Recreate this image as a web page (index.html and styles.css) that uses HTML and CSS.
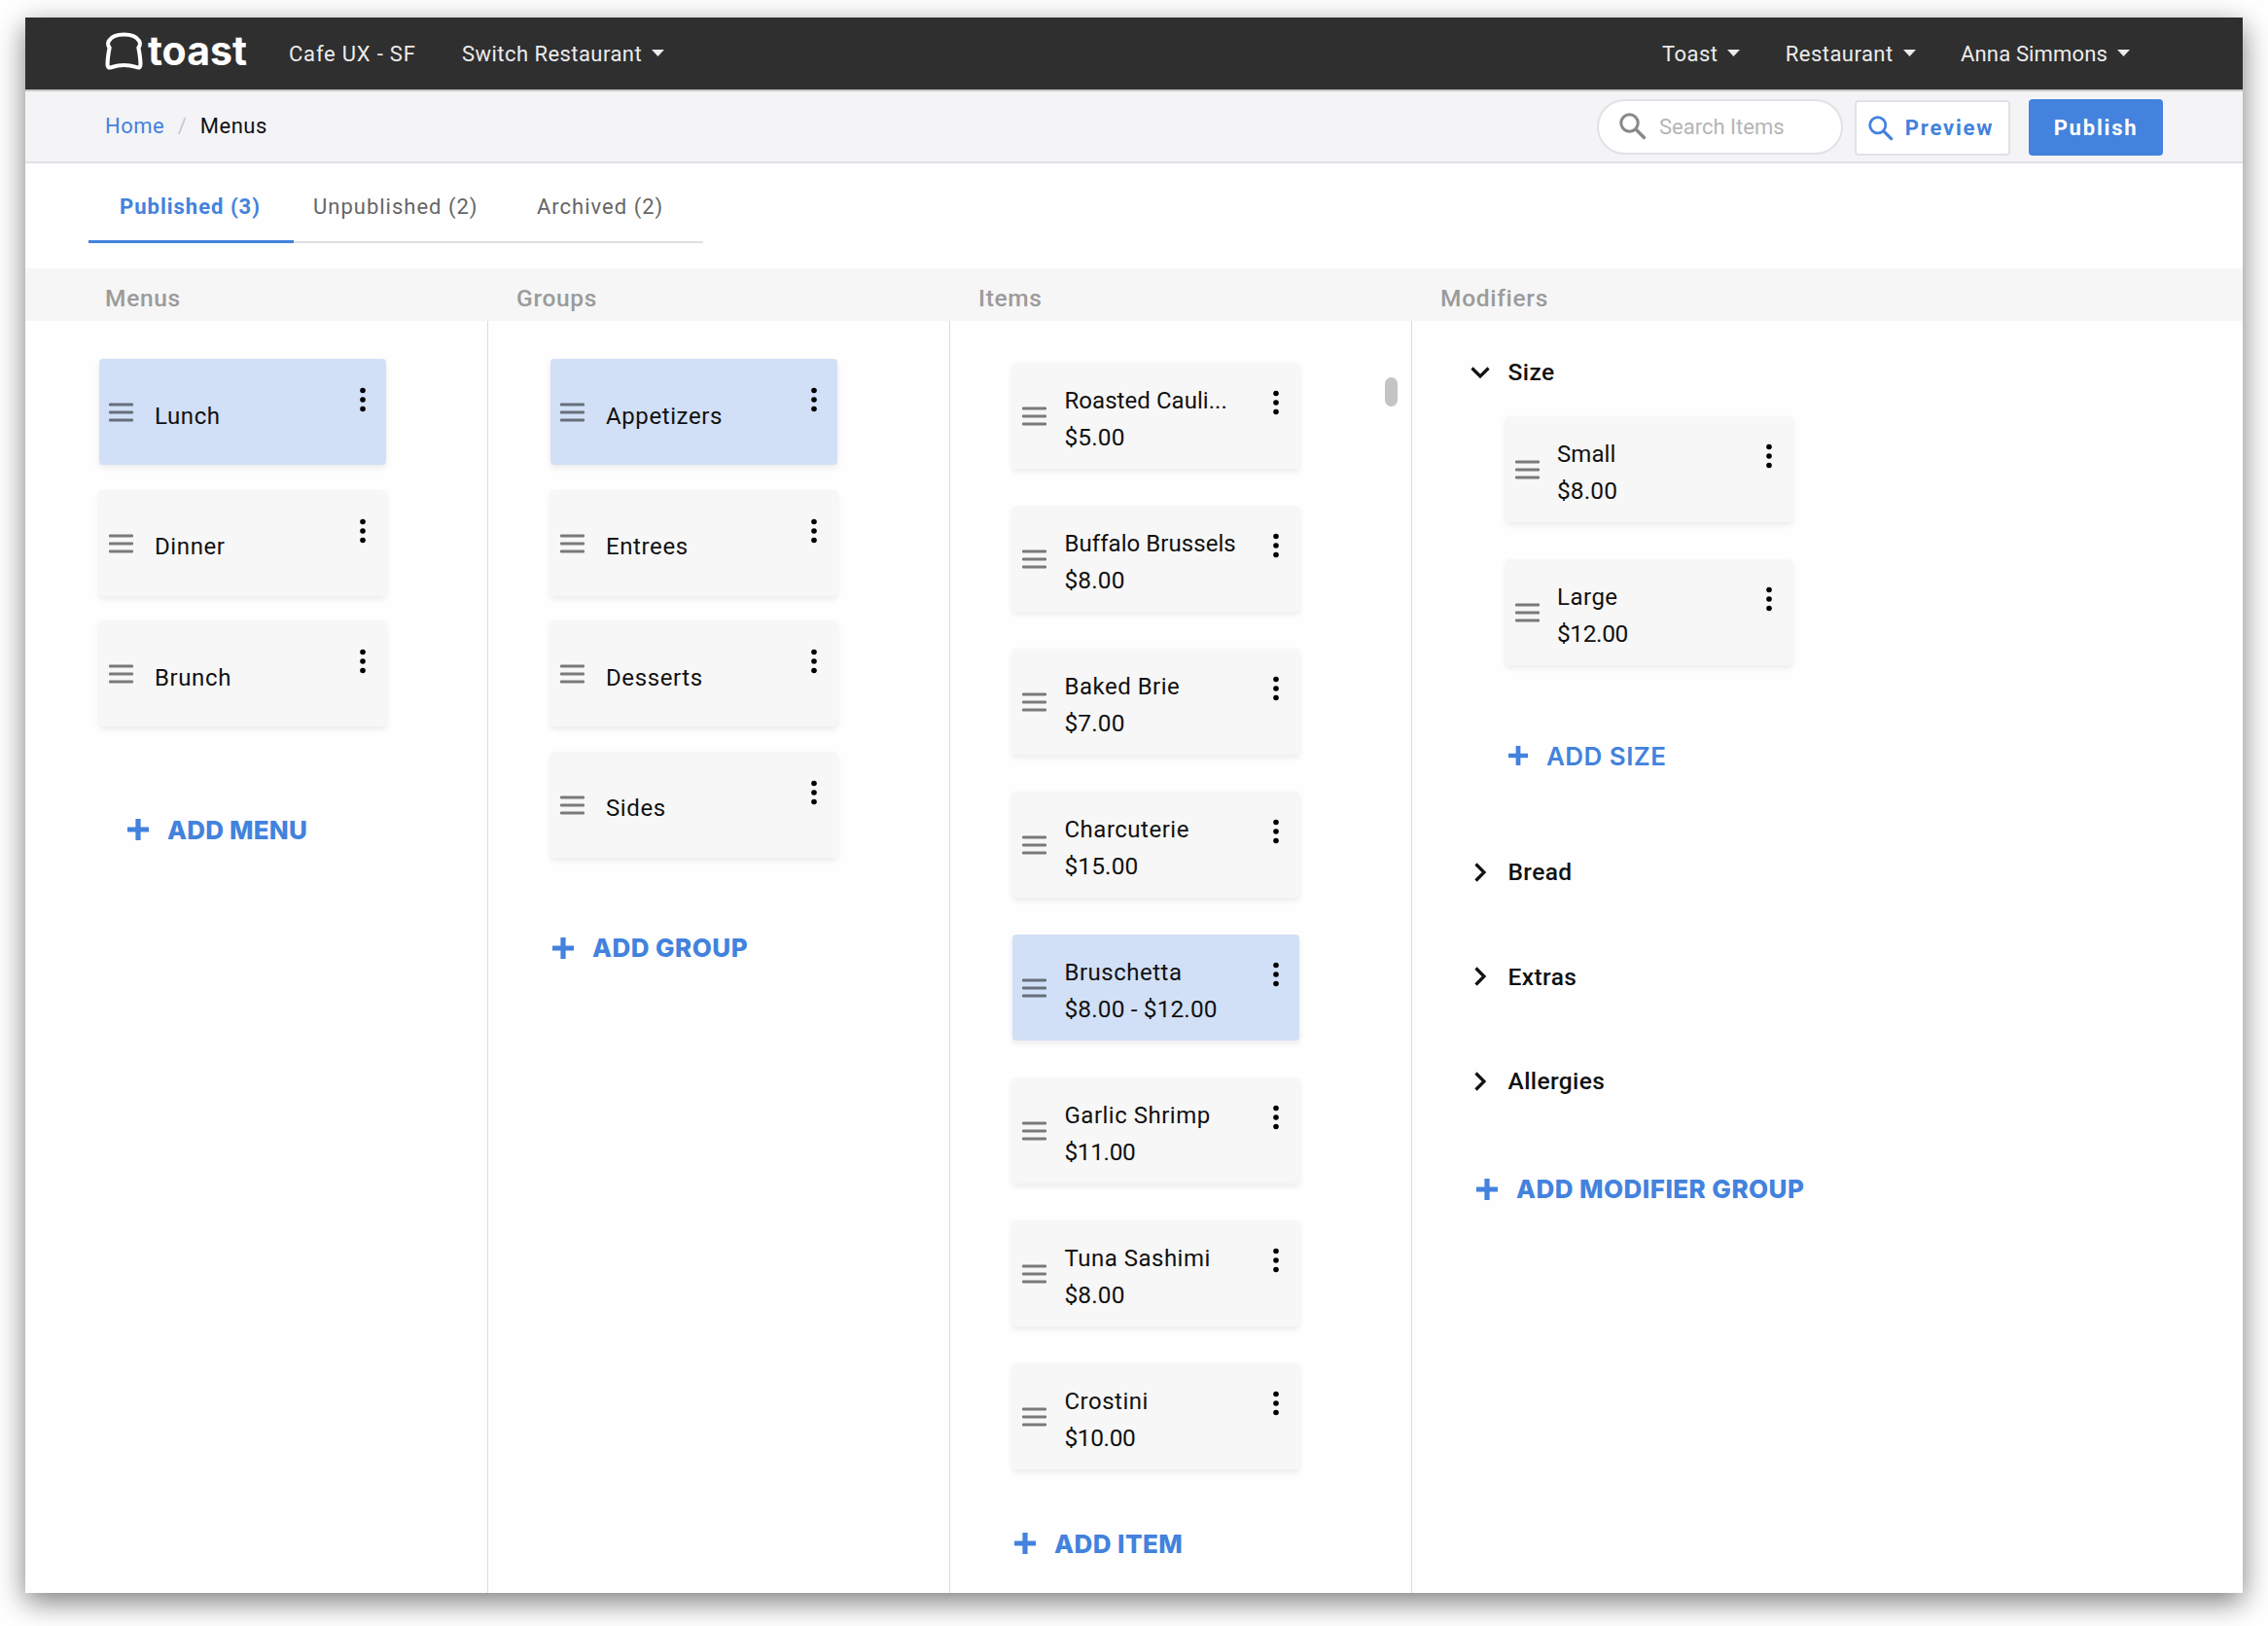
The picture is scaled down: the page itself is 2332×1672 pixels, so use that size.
FILE: index.html
```
<!DOCTYPE html>
<html lang="en">
<head>
    <meta charset="UTF-8">
    <meta name="viewport" content="width=device-width, initial-scale=1.0">
    <title>Toast - Menus</title>
    <link rel="stylesheet" href="styles.css">
</head>
<body>
<svg class="sprite">
    <symbol id="drag" viewBox="0 0 25 20">
        <path d="M1 2H24M1 10H24M1 18H24" stroke="currentColor" stroke-width="2.8" stroke-linecap="round"/>
    </symbol>
    <symbol id="dots" viewBox="0 0 8 26">
        <circle cx="4" cy="3.5" r="2.8"/><circle cx="4" cy="13" r="2.8"/><circle cx="4" cy="22.5" r="2.8"/>
    </symbol>
    <symbol id="plus" viewBox="0 0 22 22">
        <path d="M11 0V22M0 11H22" stroke="currentColor" stroke-width="5.2"/>
    </symbol>
    <symbol id="search" viewBox="0 0 28 28">
        <circle cx="10.5" cy="10.5" r="8.7" fill="none" stroke="currentColor" stroke-width="3"/>
        <path d="M17 17L26.5 26.5" stroke="currentColor" stroke-width="3.4"/>
    </symbol>
    <symbol id="caret" viewBox="0 0 13 7"><path d="M0 0H13L6.5 7Z" fill="currentColor"/></symbol>
    <symbol id="down" viewBox="0 0 22 22">
        <path d="M2.5 6.5L11 15L19.5 6.5" fill="none" stroke="currentColor" stroke-width="3.2"/>
    </symbol>
    <symbol id="right" viewBox="0 0 22 22">
        <path d="M6.5 2.5L15 11L6.5 19.5" fill="none" stroke="currentColor" stroke-width="3.2"/>
    </symbol>
</svg>

<div class="window">
    <header class="topbar">
        <div class="logo">
            <svg class="bread" viewBox="0 0 38 38"><path d="M4.500 15.500C2.500 13 2.500 10 4.500 8C9 0.500 29 0.500 33.500 8C35.500 10 35.500 13 33.500 15.500C34.500 21 35.500 26 35.500 32C35.500 36 34 36 31 35C24 32.800 14 32.800 7 35C4 36 2.500 36 2.500 32C2.500 26 3.500 21 4.500 15.500Z" fill="none" stroke="#fff" stroke-width="4" stroke-linejoin="round"/></svg>
            <span>toast</span>
        </div>
        <span class="location">Cafe UX - SF</span>
        <a class="nav-link">Switch Restaurant <svg class="caret"><use href="#caret"/></svg></a>
        <nav class="nav-right">
            <a class="nav-link">Toast <svg class="caret"><use href="#caret"/></svg></a>
            <a class="nav-link">Restaurant <svg class="caret"><use href="#caret"/></svg></a>
            <a class="nav-link user">Anna Simmons <svg class="caret"><use href="#caret"/></svg></a>
        </nav>
    </header>

    <div class="subbar">
        <div class="breadcrumb">
            <a>Home</a><span class="slash">/</span><span>Menus</span>
        </div>
        <div class="actions">
            <div class="search"><svg class="search-icon"><use href="#search"/></svg>Search Items</div>
            <button class="btn preview"><svg class="search-icon"><use href="#search"/></svg>Preview</button>
            <button class="btn publish">Publish</button>
        </div>
    </div>

    <div class="tabs">
        <div class="tab active">Published (3)</div>
        <div class="tab unpublished">Unpublished (2)</div>
        <div class="tab archived">Archived (2)</div>
    </div>

    <div class="heads">
        <div>Menus</div>
        <div>Groups</div>
        <div>Items</div>
        <div>Modifiers</div>
    </div>

    <main class="columns">
        <section class="column menus">
            <div class="cards">
                <div class="card selected"><svg class="drag"><use href="#drag"/></svg><div class="name">Lunch</div><svg class="dots"><use href="#dots"/></svg></div>
                <div class="card"><svg class="drag"><use href="#drag"/></svg><div class="name">Dinner</div><svg class="dots"><use href="#dots"/></svg></div>
                <div class="card"><svg class="drag"><use href="#drag"/></svg><div class="name">Brunch</div><svg class="dots"><use href="#dots"/></svg></div>
            </div>
            <div class="add"><svg class="plus"><use href="#plus"/></svg>ADD MENU</div>
        </section>

        <section class="column groups">
            <div class="cards">
                <div class="card selected"><svg class="drag"><use href="#drag"/></svg><div class="name">Appetizers</div><svg class="dots"><use href="#dots"/></svg></div>
                <div class="card"><svg class="drag"><use href="#drag"/></svg><div class="name">Entrees</div><svg class="dots"><use href="#dots"/></svg></div>
                <div class="card"><svg class="drag"><use href="#drag"/></svg><div class="name">Desserts</div><svg class="dots"><use href="#dots"/></svg></div>
                <div class="card"><svg class="drag"><use href="#drag"/></svg><div class="name">Sides</div><svg class="dots"><use href="#dots"/></svg></div>
            </div>
            <div class="add"><svg class="plus"><use href="#plus"/></svg>ADD GROUP</div>
        </section>

        <section class="column items">
            <div class="cards priced">
                <div class="card"><svg class="drag"><use href="#drag"/></svg><div class="name">Roasted Cauli...<div class="price">$5.00</div></div><svg class="dots"><use href="#dots"/></svg></div>
                <div class="card"><svg class="drag"><use href="#drag"/></svg><div class="name">Buffalo Brussels<div class="price">$8.00</div></div><svg class="dots"><use href="#dots"/></svg></div>
                <div class="card"><svg class="drag"><use href="#drag"/></svg><div class="name wide">Baked Brie<div class="price">$7.00</div></div><svg class="dots"><use href="#dots"/></svg></div>
                <div class="card"><svg class="drag"><use href="#drag"/></svg><div class="name wide">Charcuterie<div class="price">$15.00</div></div><svg class="dots"><use href="#dots"/></svg></div>
                <div class="card selected"><svg class="drag"><use href="#drag"/></svg><div class="name wide">Bruschetta<div class="price">$8.00 - $12.00</div></div><svg class="dots"><use href="#dots"/></svg></div>
                <div class="card"><svg class="drag"><use href="#drag"/></svg><div class="name wide">Garlic Shrimp<div class="price narrow">$11.00</div></div><svg class="dots"><use href="#dots"/></svg></div>
                <div class="card"><svg class="drag"><use href="#drag"/></svg><div class="name wide">Tuna Sashimi<div class="price">$8.00</div></div><svg class="dots"><use href="#dots"/></svg></div>
                <div class="card"><svg class="drag"><use href="#drag"/></svg><div class="name wide">Crostini<div class="price narrow">$10.00</div></div><svg class="dots"><use href="#dots"/></svg></div>
            </div>
            <div class="add"><svg class="plus"><use href="#plus"/></svg>ADD ITEM</div>
            <div class="scroll-thumb"></div>
        </section>

        <section class="column modifiers">
            <div class="modifier"><svg class="chevron"><use href="#down"/></svg>Size</div>
            <div class="cards priced">
                <div class="card"><svg class="drag"><use href="#drag"/></svg><div class="name">Small<div class="price">$8.00</div></div><svg class="dots"><use href="#dots"/></svg></div>
                <div class="card"><svg class="drag"><use href="#drag"/></svg><div class="name wide">Large<div class="price narrow">$12.00</div></div><svg class="dots"><use href="#dots"/></svg></div>
            </div>
            <div class="add add-size"><svg class="plus"><use href="#plus"/></svg>ADD SIZE</div>
            <div class="collapsed">
                <div class="modifier"><svg class="chevron"><use href="#right"/></svg>Bread</div>
                <div class="modifier"><svg class="chevron"><use href="#right"/></svg>Extras</div>
                <div class="modifier"><svg class="chevron"><use href="#right"/></svg>Allergies</div>
            </div>
            <div class="add add-modifier"><svg class="plus"><use href="#plus"/></svg>ADD MODIFIER GROUP</div>
        </section>
    </main>
</div>
</body>
</html>
```
FILE: styles.css
```
* {
    box-sizing: border-box;
}
body {
    margin: 0;
    padding: 18px 26px 34px;
    height: 1672px;
    background: #fff;
    font-family: Roboto, "Liberation Sans", sans-serif;
    font-size: 22px;
    color: #111;
    overflow: hidden;
}
svg {
    display: block;
    flex: none;
}
.sprite {
    display: none;
}
.window {
    display: flex;
    flex-direction: column;
    width: 2280px;
    height: 1620px;
    background: #fefefe;
    box-shadow: 0 9px 28px rgba(0,0,0,0.52);
}

/* top bar */
.topbar {
    display: flex;
    align-items: center;
    height: 76px;
    padding: 0 116px 0 82px;
    background: #2f2f2f;
    border-bottom: 2px solid #c8c8c8;
    color: #ececec;
    white-space: nowrap;
}
.logo {
    display: flex;
    align-items: center;
    width: 189px;
    padding-bottom: 6px;
    font-family: Inter, sans-serif;
    font-size: 41px;
    font-weight: 700;
    line-height: 40px;
    color: #fff;
}
.bread {
    width: 39px;
    height: 39px;
    margin-right: 5px;
}
.location {
    width: 178px;
    letter-spacing: 0.8px;
}
.nav-link {
    display: flex;
    align-items: center;
    gap: 10px;
    letter-spacing: 0.45px;
}
.nav-link.user {
    letter-spacing: 0.15px;
}
.caret {
    width: 13px;
    height: 7px;
    margin-top: -2px;
}
.nav-right {
    display: flex;
    gap: 46.5px;
    margin-left: auto;
}

/* breadcrumb and actions */
.subbar {
    display: flex;
    justify-content: space-between;
    align-items: center;
    height: 74px;
    padding: 0 82px;
    background: #f4f4f7;
    border-bottom: 2px solid #e1e1e6;
}
.breadcrumb {
    padding-bottom: 2px;
    letter-spacing: 0.5px;
}
.breadcrumb a {
    color: #4382dd;
}
.slash {
    margin: 0 13.5px;
    color: #c8c8cc;
}
.actions {
    display: flex;
    align-items: center;
    padding-top: 2px;
}
.search {
    display: flex;
    align-items: center;
    gap: 13px;
    width: 253px;
    height: 57px;
    margin: 0 12px 2px 0;
    padding-left: 21px;
    border: 2px solid #e1e1e6;
    border-radius: 29px;
    background: #fff;
    color: #b5b5b5;
}
.search-icon {
    width: 28px;
    height: 28px;
}
.search .search-icon {
    color: #888;
    margin-top: -1px;
}
.btn {
    display: flex;
    align-items: center;
    justify-content: center;
    font-family: inherit;
    font-size: 22px;
    font-weight: 700;
    letter-spacing: 1.8px;
    border-radius: 4px;
    padding: 0;
}
.preview {
    width: 160px;
    height: 57px;
    margin: 1px 19px 0 0;
    padding-right: 3px;
    gap: 12px;
    background: #fff;
    border: 2px solid #e1e1e6;
    color: #4382dd;
}
.preview .search-icon {
    width: 26px;
    height: 26px;
}
.publish {
    width: 138px;
    height: 58px;
    padding-top: 1px;
    border: none;
    background: #4382dd;
    color: #fff;
}

/* tabs */
.tabs {
    display: flex;
    height: 108px;
    padding-left: 65px;
    letter-spacing: 1px;
}
.tab {
    height: 82px;
    padding-top: 30px;
    line-height: 30px;
    color: #666;
    border-bottom: 2px solid #dfdfdf;
}
.tab.active {
    width: 211px;
    padding-left: 32px;
    color: #4382dd;
    font-weight: 700;
    border-bottom: 3px solid #4382dd;
}
.unpublished {
    width: 230px;
    padding-left: 20px;
}
.archived {
    width: 191px;
    padding-left: 20px;
}

.heads, .columns {
    display: grid;
    grid-template-columns: 476px 475px 475px 1fr;
}
.heads {
    height: 54px;
    padding-top: 16px;
    background: #f6f6f6;
    color: #9b9b9b;
    font-size: 24.5px;
    font-weight: 500;
    line-height: 30px;
    letter-spacing: 0.7px;
}
.heads div {
    padding-left: 29px;
}
.heads div:first-child {
    padding-left: 82px;
}

/* columns */
.columns {
    flex: 1;
}
.column {
    padding: 39px 0 0 64px;
    border-right: 1px solid #dcdcdc;
}
.cards {
    display: flex;
    flex-direction: column;
    gap: 25.5px;
    width: 295px;
}
.card {
    display: flex;
    height: 109px;
    padding: 0 20px 0 10px;
    background: #f7f7f7;
    border-radius: 4px;
    box-shadow: 0 3px 6px rgba(0,0,0,0.08);
    font-size: 24px;
    line-height: 38px;
    letter-spacing: 0.6px;
    white-space: nowrap;
}
.card.selected {
    background: #d1e0f6;
}
.drag {
    width: 25px;
    height: 20px;
    margin-top: 45px;
    color: #000;
    opacity: 0.5;
}
.name {
    flex: 1;
    padding: 39.5px 0 0 22px;
}
.dots {
    width: 8px;
    height: 26px;
    margin-top: 29px;
}
.priced {
    gap: 38px;
}
.priced .card {
    letter-spacing: 0.05px;
}
.priced .name {
    padding: 20px 0 0 18.5px;
}
.priced .name.wide {
    letter-spacing: 0.5px;
}
.name .price {
    font-size: 24.5px;
    letter-spacing: 0.1px;
}
.name .price.narrow {
    letter-spacing: -0.4px;
}
.priced .dots {
    margin-top: 28px;
}
.add {
    display: flex;
    align-items: center;
    gap: 19px;
    height: 30px;
    font-family: Inter, sans-serif;
    font-size: 26px;
    font-weight: 800;
    letter-spacing: 0.45px;
    color: #4382dd;
    white-space: nowrap;
}
.plus {
    width: 22px;
    height: 22px;
}
.menus {
    padding-left: 76px;
}
.menus .add {
    margin: 91px 0 0 29px;
    letter-spacing: 0.2px;
}
.groups .add {
    margin: 78px 0 0 2px;
}
.items {
    position: relative;
    padding-top: 43px;
}
.items .add {
    margin: 61px 0 0 2px;
}
.scroll-thumb {
    position: absolute;
    top: 58px;
    right: 14px;
    width: 13px;
    height: 30px;
    border-radius: 7px;
    background: #c4c4c4;
}

/* modifiers */
.modifiers {
    padding: 37.5px 0 0 59px;
    border-right: none;
}
.modifier {
    display: flex;
    align-items: center;
    gap: 17.5px;
    height: 30px;
    font-size: 24.5px;
    font-weight: 500;
    letter-spacing: 0.4px;
}
.chevron {
    width: 22px;
    height: 22px;
}
.modifiers .cards {
    margin: 30.5px 0 0 36.5px;
}
.add-size {
    margin: 78px 0 0 40px;
    font-weight: 600;
}
.add-size .plus {
    width: 20px;
}
.collapsed {
    display: flex;
    flex-direction: column;
    gap: 77.6px;
    margin-top: 89.5px;
}
.add-modifier {
    margin: 81px 0 0 7px;
}
```
